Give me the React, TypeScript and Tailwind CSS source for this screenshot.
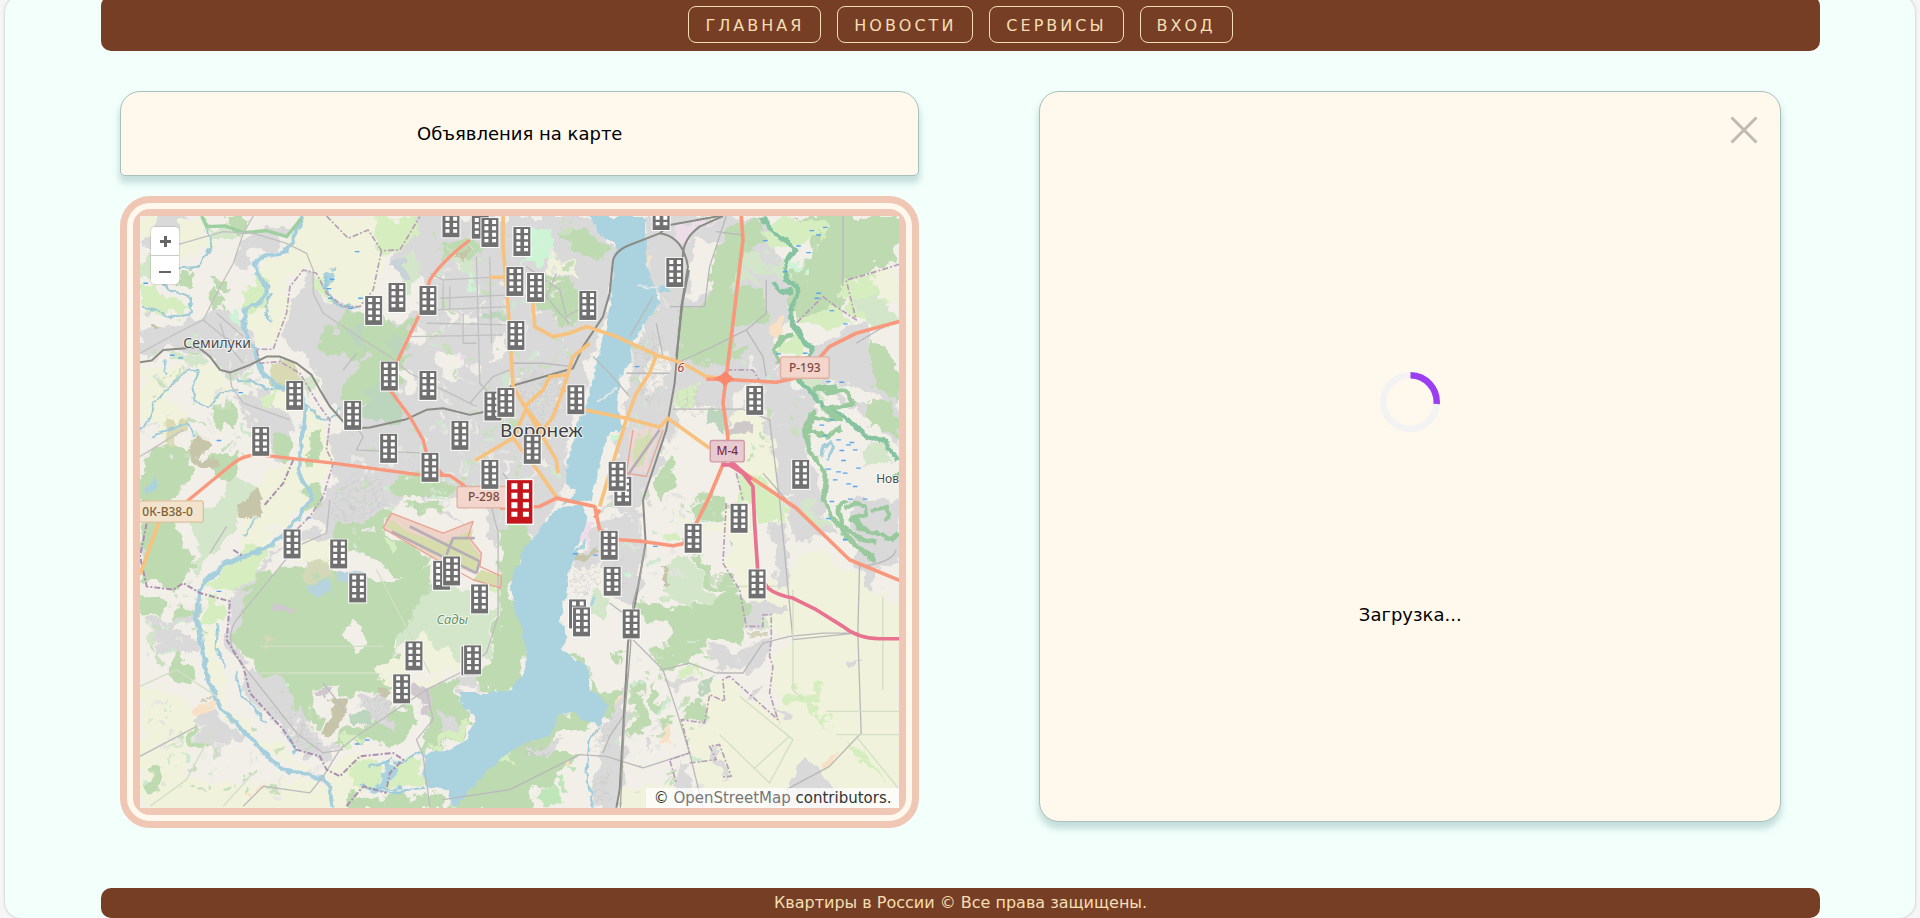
import React from "react";

type Shape = { fill: string; d: string };
type Line = { color: string; width: number; d: string; dash?: string };

const FARM = "#f0f2db";
const FOREST = "#bedab1";
const GRASS = "#d6eebf";
const ALLOT = "#d3e6ca";
const TOWN = "#d9d9d9";
const LAND = "#f2efe9";
const WATER = "#aad3df";
const BROWN = "#c7c5a9";
const MINT = "#cdf4d5";
const SCRUB = "#bcd5bd";
const PEACH = "#f8e0c4";
const PINK = "#ecdde9";

/* Land cover, north-west quarter */
const areasNW: Shape[] = [
  { fill: TOWN, d: "M930 78H1450L1520 190 1500 330 1450 480 1400 640 1370 800 1360 900 1310 1000 1290 1060 1180 1020 1040 1000 900 900 780 1010 650 1060 620 960 680 870 640 780 700 690 660 640 620 560 560 480 520 440 540 330 590 250 620 270 640 330 760 380 880 400 950 310 930 230 840 230 850 190 880 170Z" },
  { fill: TOWN, d: "M285 380 340 350 400 400 430 450 440 520 400 560 340 545 300 500 180 460 110 500 90 490V430L220 400Z" },
  { fill: TOWN, d: "M90 78H230L200 150 130 190 90 170ZM410 130 480 110 540 140 500 180 430 190 410 250 370 230 390 160ZM380 620 470 600 540 660 555 730 500 820 440 720 400 680ZM110 340 160 300 170 360 120 380ZM920 540 1200 560 1200 800 1000 860 940 780Z" },
  { fill: FARM, d: "M90 78H150L130 120 90 140ZM200 100 285 78 290 120 330 160 270 170 210 210 200 160ZM575 78H700L815 180 810 280 765 350 700 350 650 300 605 240 575 240 530 290 535 360 510 440 490 475 440 475 400 380 470 300 440 230 520 190 550 130Z" },
  { fill: FARM, d: "M700 78H830L790 180 715 145ZM90 540 160 520 210 560 170 620 230 660 230 720 180 760 120 690 90 700ZM270 520 340 545 350 600 300 650 250 620ZM480 580 555 590 545 700 500 650ZM590 640 660 690 660 810 610 920 570 830ZM470 850 550 810 580 870 600 930 510 1010 390 1090 400 990Z" },
  { fill: GRASS, d: "M820 78H930L900 150 860 185 820 180 780 115ZM450 235 480 300 470 340 405 372 390 310 430 280ZM590 245 640 270 690 350 640 320ZM90 300 140 290 180 330 240 350 220 380 150 380 90 350ZM450 620 500 600 490 640Z" },
  { fill: FOREST, d: "M355 78H420L400 130 350 112ZM690 395 740 355 810 370 860 415 925 375 850 520 740 450ZM690 400 760 440 770 470 740 520 640 475 660 430ZM745 520 840 475 900 500 860 590 830 620 750 650 690 610ZM1000 150 1110 150 1110 180 1060 210 1000 220ZM200 250 240 230 250 280 210 290ZM300 310 340 330 320 370ZM340 270 360 300 320 320 300 280Z" },
  { fill: FOREST, d: "M120 790 190 750 240 790 250 850 170 950 90 960V850ZM310 640 370 640 390 700 360 730 320 700ZM310 790 390 790 370 870 310 850ZM480 740 520 740 550 800 520 810 490 790ZM600 740 650 700 640 780 600 840ZM840 860 950 850 1040 900 1000 930 840 900ZM480 560 530 580 510 600 460 580ZM580 880 620 870 640 940 590 970Z" },
  { fill: ALLOT, d: "M190 485 270 490 290 530 240 540 180 500ZM460 510 430 540 430 600 400 570ZM380 850 450 900 370 1010 330 1080 280 1110 260 1010ZM90 210 170 200 190 240 130 270 90 260ZM290 95 350 115 390 130 370 150 310 130ZM580 540 620 570 600 620 560 590ZM870 200 920 190 940 240 900 310 870 290ZM1020 170 1100 210 1100 270 1040 240Z" },
  { fill: SCRUB, d: "M720 400 770 400 770 470 730 470ZM770 600 880 600 870 680 760 700ZM500 510 560 560 520 570 480 530ZM1125 360 1185 360 1180 385 1125 385ZM840 440 890 450 860 490Z" },
  { fill: BROWN, d: "M265 740 290 770 285 800 340 810 320 850 260 830 240 790ZM135 410 155 400 160 420 145 430ZM375 960 450 900 460 950 410 990ZM1020 190 1070 170 1060 210Z" },
  { fill: "#d9d9b3", d: "M480 520 530 515 590 570 560 600 480 570ZM150 700 200 720 240 700 200 770Z" },
  { fill: LAND, d: "M860 520 900 540 920 600 890 620ZM1010 370 1040 365 1040 410 1010 410ZM1055 365 1095 365 1095 410 1055 410ZM980 490 1050 480 1080 540 1000 570ZM900 420 960 420 940 470 890 470ZM1150 440 1200 440 1200 500 1140 510ZM820 370 850 390 900 340 870 410ZM800 240 840 260 860 350 820 380 790 340Z" },
  { fill: MINT, d: "M1060 255 1080 250 1085 310 1060 310ZM345 365 385 370 380 400 350 390ZM1250 150 1330 130 1340 230 1270 230Z" },
  { fill: PINK, d: "M1045 475 1070 490 1065 530 1045 515Z" },
  { fill: "#c9d2d8", d: "M840 220 880 200 900 260 870 270Z" },
  { fill: WATER, d: "M110 890 130 870 150 885 140 908 118 908ZM640 230 670 240 665 300 650 290Z" },
];

/* Land cover, north-east quarter */
const areasNE: Shape[] = [
  { fill: TOWN, d: "M440 78H800L830 200 880 300 870 400 820 450 830 520 900 600 960 640 910 760 960 870 960 960 870 930 760 860 760 780 690 760 670 640 640 660 520 640 520 740 430 960H300L340 820 420 440 470 330 440 250Z" },
  { fill: TOWN, d: "M920 490 1060 410 1110 400 1120 520 1200 600V760L1100 700 980 600ZM800 680 900 700 910 800 940 900 840 910 830 800ZM100 78 280 78 340 160 330 300 200 420 100 400Z" },
  { fill: LAND, d: "M600 130 660 150 640 300 570 320 570 200ZM580 690 640 690 640 760 600 740ZM500 740 600 840 560 960H470ZM980 570 1120 600 1150 640 1040 640ZM730 590 800 590 800 660 690 650ZM430 540 500 470 500 600 440 620ZM280 860 350 870 320 950 280 950ZM980 690 1080 680 1100 800 1060 900 1000 900Z" },
  { fill: FOREST, d: "M660 160 720 90 790 78 760 200 710 260 700 480 760 460 740 500 560 520 530 500 545 350 615 350 640 230ZM700 300 800 300 800 380 700 440ZM880 78H1200V210L1040 270 1030 380 1060 400 900 400 870 330 850 270 930 180 960 110ZM530 390 660 400 660 500 540 520ZM190 120 250 130 330 170 320 210 280 220 220 180ZM130 240 200 260 270 330 220 400 110 370Z" },
  { fill: FOREST, d: "M1120 440 1200 520V640L1140 600 1110 530ZM1090 640 1180 640 1200 730 1110 720ZM100 280 150 300 170 340 130 350ZM490 820 520 790 540 880 480 930Z" },
  { fill: GRASS, d: "M780 120 860 78 990 110 880 170 800 180 780 170ZM1040 270 1120 250 1130 330 1200 300 1130 390 1070 390 1030 300ZM730 850 760 800 860 960 700 960ZM530 590 590 580 590 650 520 650ZM890 380 1010 340 1060 400 930 410ZM840 440 900 440 910 490 840 500Z" },
  { fill: FARM, d: "M690 660 790 660 830 790 840 930 790 900 760 850 690 800ZM1120 250 1190 230 1200 350 1130 310ZM130 200 220 210 250 260 150 240Z" },
  { fill: ALLOT, d: "M740 180 820 210 830 250 720 240ZM730 240 800 290 700 280ZM820 230 860 230 880 290 840 280ZM1060 320 1120 310 1200 420 1100 400ZM1100 760 1170 760 1170 810 1080 820ZM880 540 960 560 980 640 920 600Z" },
  { fill: SCRUB, d: "M630 670 670 650 680 740 620 710Z" },
  { fill: MINT, d: "M90 130 160 120 160 200 80 230 70 180ZM870 220 900 220 900 235 875 240ZM910 240 925 240 925 270 910 265ZM320 730 380 720 360 750Z" },
  { fill: PEACH, d: "M800 400 850 390 870 420 820 450ZM440 190 460 200 450 270Z" },
  { fill: "#cfc8c8", d: "M695 700 750 700 750 735 695 735Z" },
  { fill: PINK, d: "M510 115 660 78 600 110 560 160 545 160Z" },
  { fill: "#e9d8d5", d: "M400 710 490 710 440 860 380 850Z" },
  { fill: "#d5ddb3", d: "M410 740 470 720 430 830 390 840Z" },
];

/* Land cover, south-west quarter */
const areasSW: Shape[] = [
  { fill: FARM, d: "M90 560 230 600 250 690 220 830 400 860 620 840 660 870 670 940H90ZM270 370 320 380 330 500 420 640 560 780 640 820 560 810 440 730 340 620 270 460ZM650 820 720 760 790 770 800 830 740 890 700 930H660ZM400 130 520 90 450 160 380 180ZM560 130 660 100 660 180 560 190ZM810 520 940 390 1050 490 950 580 820 560Z" },
  { fill: LAND, d: "M340 500 420 560 470 640 560 750 440 700 350 600ZM240 640 420 720 520 800 400 830 350 700 230 670ZM90 380 210 320 250 420 200 500 140 470ZM190 0 240 30 250 130 200 180ZM720 150 800 200 840 160 880 200 780 260ZM90 270 200 260 240 290 140 320ZM960 0 1160 0 1170 180 1110 100ZM860 450 960 510 980 540 910 540Z" },
  { fill: FOREST, d: "M410 210 520 210 600 220 690 210 830 250 960 200 970 250 850 440 870 470 800 520 850 560 830 590 740 570 700 610 690 560 610 565 600 620 640 640 620 680 580 675 480 560 410 490 370 400 380 300Z" },
  { fill: FOREST, d: "M660 90 750 60 850 40 830 90 900 140 980 180 890 230 820 190 740 150 660 160ZM90 70 200 20 210 120 260 180 210 270 90 250ZM90 290 160 300 150 350 90 340ZM210 320 270 330 260 360 200 390ZM240 680 310 740 290 750 240 730ZM110 810 150 800 150 870 120 880ZM1190 90 1250 120 1260 0 1180 30ZM1180 150 1240 140 1210 260 1260 430 1230 560 1180 580 1110 570 1100 530 1140 450 1170 370Z" },
  { fill: FOREST, d: "M960 570 1050 530 1040 600 1100 660 1060 720 930 750 960 660ZM680 720 720 680 800 680 760 730 670 740ZM700 890 760 880 820 900 960 880 1000 890 1020 940H720ZM1040 880 1100 790 1180 780 1260 730V940H1040ZM810 630 900 620 920 680 850 750 770 710ZM190 450 230 480 250 550 180 530ZM880 0 1000 10 1020 40 940 50Z" },
  { fill: LAND, d: "M695 380 730 360 750 390 760 440 735 445 700 410Z" },
  { fill: ALLOT, d: "M870 400 960 250 1090 280 1090 340 1170 300 1160 380 1130 470 1050 490 940 390 860 450ZM230 30 370 0 390 20 330 130 300 170 250 240 260 120ZM90 370 150 350 150 450ZM160 740 230 700 210 750Z" },
  { fill: GRASS, d: "M270 260 340 210 420 150 500 130 430 220 370 290 300 280ZM280 300 350 300 350 370 280 370ZM720 790 790 780 810 830 780 860 720 870 740 830ZM850 780 930 760 950 860 830 880ZM960 740 1080 650 1095 670 1050 720ZM820 110 850 110 860 150 830 160ZM680 720 780 710 700 750ZM1090 240 1170 270 1170 300Z" },
  { fill: TOWN, d: "M100 350 200 370 250 330 260 360 190 400 250 410 250 450 150 470 160 410 120 400ZM250 640 330 640 360 680 410 700 390 720 350 700 330 760 290 740 230 660ZM370 290 430 260 400 320 380 400 400 500 350 450ZM410 510 500 540 540 610 640 720 680 740 640 800 560 740 480 650 410 590ZM740 590 820 590 850 650 840 690 780 650 740 620ZM1030 530 1110 540 1110 580 1060 575ZM980 640 1040 650 1040 680 1010 700ZM560 90 650 90 640 110 520 140 380 290 370 280 490 160ZM1110 0 1160 0 1165 150 1140 110ZM90 130 110 150 90 220ZM650 0H800L770 60 680 80Z" },
  { fill: "#cfc9cd", d: "M500 320 540 320 535 345 505 340ZM880 530 960 570 960 660 920 600ZM610 570 665 565 650 610Z" },
  { fill: "#d2d8b8", d: "M580 185 650 180 670 240 580 235ZM455 430 490 415 510 435 470 450Z" },
  { fill: BROWN, d: "M670 605 705 610 705 660 660 710 625 680 660 650ZM375 20 410 0 460 0 410 50ZM280 580 295 590 285 600ZM810 560 850 580 840 610 810 600Z" },
  { fill: PEACH, d: "M235 625 300 600 325 625 290 640 240 645ZM450 850 475 860 455 870ZM410 890 435 890 430 910ZM1180 220 1165 240 1165 200Z" },
  { fill: SCRUB, d: "M720 640 790 650 790 680 740 670Z" },
  { fill: "#b7d3de", d: "M600 240 680 245 670 285 600 280ZM690 210 740 210 745 250 700 240Z" },
  { fill: WATER, d: "M800 820 830 780 850 790 830 880 800 870Z" },
  { fill: MINT, d: "M1175 150 1195 145 1190 155ZM510 565 535 555 520 570ZM1200 405 1215 410 1205 415Z" },
];

/* Land cover, south-east quarter */
const areasSE: Shape[] = [
  { fill: FARM, d: "M680 0H760L770 230 850 260 870 200 960 150 1060 230 1200 320V930H620L600 850 550 700 540 660 610 660 620 590 680 530 830 650 820 480 880 410 800 380 740 300 680 190ZM350 860 530 850 530 930H350ZM540 30 600 80 680 70 660 110 560 110Z" },
  { fill: TOWN, d: "M300 60 420 20 430 200 400 320 330 290 300 180 210 210 220 190 300 120ZM720 320 850 300 870 340 800 340 790 380 740 380ZM620 440 700 460 730 500 700 520 640 510ZM700 460 800 420 800 500 740 510ZM330 620 380 540 370 900 350 930H280L290 780ZM490 520 590 530 590 545 520 550 520 590ZM750 560 790 570 760 600ZM830 640 860 630 870 655 840 665ZM630 740 655 735 690 820 670 835ZM790 930 870 850 920 780 960 810 1050 930ZM820 70 860 70 870 260 830 260ZM850 0 960 0 1000 110 890 130ZM1050 0H1200V200L1080 230ZM530 780 560 800 590 870 560 900 530 860ZM250 100 300 90 300 190 220 190Z" },
  { fill: TOWN, d: "M1050 480 1090 470 1080 500 1055 505ZM1080 200 1130 220 1140 260 1090 270ZM440 700 460 700 455 750 440 740ZM50 730 180 720 160 760 30 770Z" },
  { fill: FOREST, d: "M450 460 530 440 500 340 600 320 640 290 710 270 740 320 730 430 620 430 610 460 480 520ZM570 160 710 260 700 290 620 240ZM400 300 470 310 520 360 430 370ZM190 450 250 480 300 560 360 600 330 650 280 600 270 520ZM400 550 440 545 440 690 390 690ZM465 530 495 620 460 620ZM545 640 610 590 615 670ZM470 650 530 650 530 690 480 680ZM0 80 60 90 90 140 40 200 40 350 80 430 40 570 0 580ZM180 640 240 630 270 690 170 710 80 760 240 760 160 850 50 880 0 880V790L90 720ZM600 0H680L680 60 600 60ZM330 460 360 440 350 500Z" },
  { fill: ALLOT, d: "M500 210 560 160 620 240 650 290 560 330 490 310ZM280 280 320 300 310 350 270 340ZM790 350 810 350 810 390 790 390ZM930 0 1000 80 960 90 900 40Z" },
  { fill: SCRUB, d: "M600 540 660 520 650 570 600 585Z" },
  { fill: GRASS, d: "M490 90 540 80 540 125 500 125ZM760 0 820 0 860 60 780 75ZM540 495 590 495 605 520 540 522ZM830 580 880 560 900 590 960 560 960 590 930 600 1000 690 1040 730 1100 760 1160 860 1090 790 1010 700 900 600 840 620ZM0 790 50 760 40 800Z" },
  { fill: "#bfe6b8", d: "M110 890 160 850 190 900 160 930ZM200 800 230 800 230 830ZM170 840 200 850 220 890 190 880Z" },
  { fill: MINT, d: "M380 230 390 200 400 230Z" },
  { fill: PEACH, d: "M475 685 520 685 510 720 475 735ZM960 780 990 755 1000 790 970 805ZM285 685 300 680 300 710ZM340 610 360 610 350 630ZM180 795 200 800 190 820Z" },
  { fill: BROWN, d: "M215 150 280 155 260 180 220 178ZM490 210 510 205 505 245 490 245Z" },
  { fill: "#d6d3bd", d: "M750 390 790 390 790 415 755 415Z" },
  { fill: PINK, d: "M245 70 285 60 290 110 240 145Z" },
];

const airport: Shape[] = [
  { fill: "#eed3c8", d: "M820 1015 845 970 1000 1030 1090 995 1070 1040 1115 1090 1100 1155 980 1110Z" },
  { fill: "#d6dcab", d: "M845 990 900 1030 1000 1060 1090 1020 1080 1060 1110 1100 1100 1150 960 1090 830 1010ZM1115 1140 1175 1160 1170 1195 1090 1170Z" },
];

const reservoir: Shape[] = [
  { fill: WATER, d: "M1440 78H1610L1608 230 1640 300 1645 350 1610 390 1580 430 1560 480 1570 520 1530 560 1520 660 1530 680 1535 710 1500 730 1470 830 1455 880 1450 930 1350 950 1310 990 1240 1080 1200 1190 1215 1250 1250 1360 1250 1430 1210 1500 1130 1510 1050 1510 1045 1530 1090 1580 1095 1600 1060 1660 1010 1680 940 1690 945 1790 1010 1800 1030 1854 1180 1700 1260 1650 1320 1640 1350 1580 1400 1560 1470 1600 1490 1560 1490 1550 1440 1500 1440 1440 1360 1380 1370 1320 1350 1290 1370 1210 1380 1120 1430 1000 1420 950 1340 960 1400 900 1370 890 1370 810 1390 760 1400 700 1430 640 1470 480 1500 350 1510 210 1520 180 1500 150 1470 130Z" },
  { fill: WATER, d: "M1640 290 1670 285 1680 305 1650 310ZM1420 1060 1440 1050 1380 1120 1370 1110ZM1530 700 1540 710 1525 730ZM1860 1050 1875 1060 1865 1075ZM1445 1240 1455 1220 1460 1235 1440 1260ZM1290 1490 1400 1450 1440 1540 1490 1550 1480 1605 1440 1600 1380 1560 1330 1540Z" },
  { fill: "#e3e8e6", d: "M1450 640 1515 597 1518 602 1470 635ZM1580 290H1650V295H1580Z" },
];

const waterways: Line[] = [
  { color: "#a6cfdd", width: 13, d: "M582 78 555 125 535 175 510 192 460 198 438 220 440 250 470 290 470 315 440 345 405 362 397 390 420 450 440 500 458 548 495 585 530 595 575 615 582 660 575 760 566 850 590 890 608 925 570 980 520 1040 460 1082 400 1100 340 1125 295 1165 268 1205 262 1290 275 1380 295 1470 330 1550 380 1605 440 1665 500 1725 545 1750 600 1755 640 1770 660 1800 668 1854" },
  { color: "#9fcbd6", width: 6, d: "M285 78 290 120 305 170 270 230 130 240M130 270 180 300 240 320 240 370 190 385 130 360 90 350M90 720Q120 700 130 640L200 570Q230 535 265 540L245 590 250 630 295 655 330 610 380 600M380 575 420 570 470 600 520 590M580 640 640 690 680 680 690 655M640 250 650 290 670 335 700 355 740 348" },
  { color: "#9ccbdc", width: 6, d: "M160 510 165 540 175 555M130 740 230 700 260 740M440 980 400 1040M485 400 462 350 490 310M325 1300 320 1370 345 1430M375 1440 400 1520 470 1600M530 1640 555 1690M820 1810 940 1795M850 1720 940 1690M780 1735 850 1710M1470 1610 1440 1650 1430 1750 1440 1810 1455 1854M750 1790 830 1800 880 1795" },
  { color: "#86c3a1", width: 15, d: "M1960 78 1980 120 2040 160 2055 190 2025 210 2030 270 2065 300 2048 340 2045 400 2080 440 2105 480 2090 530 2060 560M1995 280 2010 300 2045 305" },
  { color: "#86c3a1", width: 13, d: "M2062 560 2100 600 2140 650 2180 668 2220 690 2260 735 2330 760 2365 810" },
  { color: "#98ca9d", width: 14, d: "M2050 430 2010 450 1995 480 2010 520M2110 600 2180 590 2150 610 2210 600 2230 640 2150 655 2190 690 2110 680 2095 720 2150 740 2200 715M2110 660 2090 720 2100 780 2150 850 2140 930 2170 990 2230 1060 2300 1115M2210 960 2230 940 2265 950 2275 975 2230 985 2250 1015 2300 1030 2345 1050 2368 1030M2210 930 2185 960 2200 1010 2260 1050 2300 1060M2290 960 2330 950 2340 980 2320 990M2340 870 2370 850" },
  { color: "#a5cdd9", width: 9, d: "M2135 800Q2140 760 2165 755 2180 760 2150 812" },
];

const minorRoads: Line[] = [
  { color: "#c0c0c0", width: 4, d: "M90 490 200 430 280 390 320 310 370 220 400 130 430 78M200 165 340 125 430 130 530 160 590 190 610 240 610 310 640 370 730 430 840 500 900 550 1000 600 1100 650M280 390 340 440 400 470M320 370 400 440M330 400 350 460 400 520M360 550 365 590 400 640 540 690M90 800 220 720M960 250 1000 270 1180 260M990 325 1200 315M970 360 1200 350M950 400 1200 405M900 440 1180 435M1100 200 1110 580M1140 200 1145 460M1060 370V460H1100M1000 270V360M1020 290V360" },
  { color: "#bdbdbd", width: 4, d: "M1110 580 1140 610M1200 540 1150 560 1080 640M730 700 760 740 740 780 940 790M700 540 740 490M380 1290Q350 1330 370 1390L410 1440 560 1630 640 1690 700 1680M380 1290 560 1070 650 1030 660 930M350 1010 300 1090M90 1700 260 1610M400 1850 460 1790 600 1810 640 1760 690 1680 740 1640 950 1500 1050 1450 1130 1390 1165 1280 1165 1030 1140 930M640 1480 710 1570M950 1500 970 1590 920 1650 940 1700 960 1850M1250 230 1350 300 1370 380 1440 340M1340 250 1310 320 1350 370 1380 400" },
  { color: "#b9b9b9", width: 4, d: "M1200 520 1300 520 1390 530M1450 500 1490 540 1560 620M1820 125 1900 135M1680 350H1785L1800 230 1850 78M1700 520 1810 470 1910 420 1970 370 1970 270M1850 450 1910 420 1960 500 1970 560M1640 400 1660 500M1550 550 1680 550M1630 320 1560 440M1690 658H1900L1980 690 2010 930 2050 1350 2240 1330M1180 850 1240 930M1500 1240 1540 1270M1570 1350 1660 1440 1700 1560 1740 1690 1780 1854M1660 1440 1740 1420 1820 1450 1900 1450 1960 1360 2040 1340 2140 1330 2250 1330M2250 1130 2245 1330 2255 1630 2160 1730 2030 1800M1000 1830 1200 1800 1410 1695 1490 1700 1600 1735 1740 1690M1480 1690 1500 1640 1540 1580 1555 1450M2360 1080Q2350 1120 2250 1130M1960 850 2030 930M2200 78V290M2340 400 2240 460" },
  { color: "#d2dfc6", width: 4, d: "M90 1490 200 1440 320 1520M310 1620 230 1770 120 1850M430 1750 340 1850M800 1140 960 1450M450 1370H820M450 1450H800M1830 1635 1980 1780 2050 1650 1890 1520M1850 1190H2010M2050 1200 2050 1500 2080 1530M2150 1565H2370M2180 1635H2370M2320 1220V1500M1930 1740 2040 1640M2240 1640 2370 1800" },
];

const railways: Line[] = [
  { color: "#8b8b86", width: 6, d: "M90 517 125 512 160 480 265 472 300 500 330 540 360 548 420 525 470 500 510 500 560 520 605 555 630 600 660 650 700 695 740 715 780 713 890 688 950 660 1000 655 1080 675 1130 665 1200 600M1200 590 1390 535 1420 470 1480 380 1500 310 1510 210Q1520 180 1560 165L1650 130 1680 105 1830 78M1650 130Q1720 140 1735 230L1715 350 1695 580 1670 720 1600 930" },
  { color: "#8b8b86", width: 6, d: "M1720 210Q1715 150 1770 110L1840 78M1738 240 1720 330 1700 500M1600 930 1608 1060 1580 1220 1555 1360 1530 1800 1520 1854" },
  { color: "#a5a5a0", width: 4, d: "M1605 1070 1590 1170 1570 1240 1562 1380 1545 1580 1532 1854" },
];

const borders: Line[] = [
  { color: "#b79fb8", width: 5, dash: "18 6 6 6", d: "M650 78 715 145 775 120 815 182 870 180 930 80M815 182 790 300 750 350 700 350 650 310 620 250 580 240 540 290 530 370 500 450 490 478H440L450 520 510 515 570 550 630 650 660 690 650 780 670 820 640 920 600 980 540 1040" },
  { color: "#a98fb0", width: 6, dash: "18 6 6 6", d: "M550 810 520 880 460 950M100 930 110 1000 90 1100 110 1190 190 1200 220 1180 270 1210 360 1235 350 1350 400 1430 420 1510 520 1620 560 1680 630 1700 650 1740 690 1760 750 1700 850 1690 880 1710 840 1750 830 1800M710 1850 760 1790 830 1810M370 1080 400 1100" },
  { color: "#b79fb8", width: 5, dash: "18 6 6 6", d: "M2370 223 2250 260 2210 270 2240 390 2180 350 2140 320 2080 380 2050 410M1850 540H1930L1960 590M1880 850 1900 930M1850 940 1840 1120 1890 1200 1910 1310H1960V1275H1985V1345L1980 1400 1990 1430 1980 1510 2005 1590 1860 1460 1840 1470 1845 1535 1800 1515 1785 1600 1715 1590 1740 1690 1680 1710 1700 1780M1740 1720 1820 1710 1800 1670 1830 1665 1865 1760 1840 1762" },
];

const majorRoads: Line[] = [
  { color: "#f7c27d", width: 11, d: "M1180 78 1180 170 1195 350 1210 590 1245 650 1340 810 1345 850M1140 262H1182M1268 320 1275 410 1330 440 1380 430 1430 410 1520 440 1640 495 1720 520 1790 560 1840 565M1095 812 1210 745 1250 655M1210 745 1290 850 1345 928M1390 500 1360 600 1330 680 1300 720 1245 650 1300 600 1320 560 1370 555M1390 500 1440 460M1425 660 1550 685 1650 712 1675 685 1800 775M1640 495 1620 550 1580 610 1550 690 1500 850 1470 950M90 1155 160 960M1352 600H1370" },
  { color: "#f8987c", width: 10, d: "M200 960 370 820Q400 795 450 795L670 820 930 855 1020 857 1060 885 1120 940M1080 150Q1000 210 960 270L940 350 860 520 840 600 900 680 940 750 950 790 1000 858" },
  { color: "#f8987c", width: 11, d: "M1895 78 1900 150 1870 400 1850 560 1840 640 1855 740 1850 800 1800 920 1770 980 1740 1040 1720 1062 1690 1068 1600 1055 1530 1050 1470 1020 1455 950 1340 925 1290 950 1170 955M1455 985 1470 960M1790 568 1840 568 2000 577 2080 560 2160 470 2240 430 2370 395M1860 820 1950 880 2060 955 2220 1110 2370 1172" },
  { color: "#e8728f", width: 11, d: "M1835 825 1860 825 1900 850 1930 890 1935 1000 1945 1150 1975 1195Q2000 1215 2050 1225L2120 1260 2200 1310Q2250 1350 2320 1347H2370M1865 815 1925 870" },
];

const airfield: Line[] = [
  { color: "#b5adb8", width: 8, d: "M845 1025 1100 1150M900 1010 1110 1115 1100 1150M1010 1095 1030 1045H1095M1555 855 1650 720" },
  { color: "#eaa392", width: 4, d: "M820 1015 845 970 1000 1030 1090 995 1075 1040 1115 1090 1110 1130 1175 1160 1172 1195 1090 1170 980 1110 820 1015M1570 720 1550 850 1610 860 1660 720" },
];

const bogTicks = [
  [2100, 122], [2120, 135], [2140, 112], [2060, 168], [2090, 188], [1960, 152], [2020, 245], [2120, 310], [2115, 325],
  [2160, 362], [2200, 402], [2080, 490], [2000, 492], [2150, 575], [2190, 577], [2160, 690], [2130, 706], [2140, 738],
  [2180, 750], [2210, 765], [2190, 782], [2230, 780], [2195, 812], [2180, 846], [2240, 835], [2150, 838], [2210, 882],
  [2230, 890], [2160, 935], [2215, 928], [2260, 928], [2220, 758], [2170, 870], [2200, 850], [1575, 530], [1390, 1092],
  [1450, 1096], [1630, 1070], [2150, 986], [2200, 1050], [660, 268], [650, 296], [735, 185], [655, 325], [745, 325],
  [715, 355], [180, 496], [205, 504], [320, 752], [385, 608], [100, 280], [590, 984], [320, 1205], [765, 1651], [735, 1663],
];

/* Small parks and yards, scattered with a fixed seed so the map is stable */
const speckles = (() => {
  let seed = 41;
  const next = () => {
    seed = (seed * 16807) % 2147483647;
    return seed / 2147483647;
  };
  const tones = ["#c6dfba", "#efece6", "#cfe8d0", "#e3e3e0", "#c9dfbe", "#e9e7e2"];
  const zones = [
    [950, 90, 420, 850], [1560, 330, 130, 560], [680, 700, 480, 260], [1480, 900, 360, 280], [100, 400, 340, 400],
    [1520, 1360, 260, 440], [100, 1540, 520, 280], [1900, 500, 160, 300], [90, 1200, 180, 220], [700, 1000, 130, 90],
  ];
  return zones.flatMap(([x, y, w, h]) =>
    Array.from({ length: Math.round((w * h) / 2000) }, () => {
      const px = Math.round(x + next() * w);
      const py = Math.round(y + next() * h);
      const a = Math.round(6 + next() * 16);
      const b = Math.round(5 + next() * 14);
      return {
        fill: tones[Math.floor(next() * tones.length)],
        d: `M${px} ${py}l${a} ${-Math.round(b / 3)} ${Math.round(a / 3)} ${b} ${-a} ${Math.round(b / 3)}Z`,
      };
    }),
  );
})();

const markers: [number, number][] = [
  [995, 53], [1083, 57], [1112, 82], [1208, 109], [1187, 229], [1249, 247], [833, 277], [763, 316], [926, 286],
  [1190, 391], [810, 513], [926, 541], [1121, 603], [1160, 592], [526, 571], [700, 631], [424, 709], [808, 730],
  [1022, 691], [932, 787], [1112, 808], [1239, 733], [1626, 31], [1667, 202], [1406, 301], [1370, 584], [1907, 586],
  [1511, 859], [1494, 814], [2045, 808], [1860, 940], [518, 1017], [658, 1047], [715, 1149], [967, 1111], [997, 1098],
  [1081, 1182], [884, 1353], [847, 1452], [1052, 1368], [1060, 1365], [1470, 1021], [1722, 1000], [1914, 1137],
  [1479, 1129], [1375, 1227], [1387, 1251], [1536, 1257],
];

function Areas({ items }: { items: Shape[] }) {
  return (
    <>
      {items.map((s, i) => (
        <path key={i} d={s.d} fill={s.fill} />
      ))}
    </>
  );
}

function Lines({ items }: { items: Line[] }) {
  return (
    <g fill="none" strokeLinejoin="round">
      {items.map((l, i) => (
        <path key={i} d={l.d} stroke={l.color} strokeWidth={l.width} strokeDasharray={l.dash} />
      ))}
    </g>
  );
}

function Building({ x, y, color, scale = 1 }: { x: number; y: number; color: string; scale?: number }) {
  return (
    <g transform={`translate(${x} ${y}) scale(${scale})`}>
      <rect width="57" height="92" fill="#fff" />
      <rect x="3" y="2" width="51" height="87" fill={color} />
      <path fill="#fff" d="M12 8h12v12H12zM35 8h12v12H35zM12 27h12v12H12zM35 27h12v12H35zM12 46h12v12H12zM35 46h12v12H35zM12 65h12v10H12zM35 65h12v10H35z" />
    </g>
  );
}

function RoadShield({ x, y, w, text, fill, stroke, color }: { x: number; y: number; w: number; text: string; fill: string; stroke: string; color: string }) {
  return (
    <g>
      <rect x={x} y={y} width={w} height="64" rx="6" fill={fill} stroke={stroke} strokeWidth="4" />
      <text x={x + w / 2} y={y + 45} textAnchor="middle" fontSize="36" fontWeight="500" fill={color}>
        {text}
      </text>
    </g>
  );
}

function CityMap() {
  return (
    <svg viewBox="90 78 2280 1776" className="block h-auto w-full font-['Noto_Sans',sans-serif]" role="img" aria-label="Карта Воронежа">
      <defs>
        <filter id="coast" filterUnits="userSpaceOnUse" x="0" y="0" width="2460" height="1940" colorInterpolationFilters="sRGB">
          <feTurbulence type="fractalNoise" baseFrequency="0.018" numOctaves="4" seed="7" result="noise" />
          <feDisplacementMap in="SourceGraphic" in2="noise" scale="75" xChannelSelector="R" yChannelSelector="G" />
        </filter>
        <filter id="shore" filterUnits="userSpaceOnUse" x="0" y="0" width="2460" height="1940" colorInterpolationFilters="sRGB">
          <feTurbulence type="fractalNoise" baseFrequency="0.03" numOctaves="3" seed="3" result="noise" />
          <feDisplacementMap in="SourceGraphic" in2="noise" scale="24" xChannelSelector="R" yChannelSelector="G" />
        </filter>
        <pattern id="streets" width="26" height="20" patternUnits="userSpaceOnUse" patternTransform="rotate(-18)">
          <path d="M0 0H26M0 0V20" stroke="#c6c6c6" strokeWidth="3" />
        </pattern>
      </defs>
      <rect x="90" y="78" width="2280" height="1776" fill={LAND} />
      <g filter="url(#coast)">
        <rect x="0" y="0" width="2460" height="1940" fill={LAND} />
        <Areas items={areasNW} />
        <g transform="translate(1170 0)">
          <Areas items={areasNE} />
        </g>
        <g transform="translate(0 930)">
          <Areas items={areasSW} />
        </g>
        <g transform="translate(1170 930)">
          <Areas items={areasSE} />
        </g>
        <Areas items={speckles} />
        <path
          fill="url(#streets)"
          d="M1230 560 1370 540 1330 700 1240 760ZM700 860 800 850 840 960 720 1010 650 1000ZM1390 1130 1470 1120 1470 1200 1390 1220ZM1490 1120 1560 1110 1540 1220 1490 1180ZM740 1520 820 1520 850 1590 780 1590ZM470 1560 540 1560 660 1680 600 1700ZM1700 600 1760 590 1790 680 1710 670ZM1460 1580 1520 1570 1500 1700 1450 1690ZM1470 1740 1510 1730 1500 1850 1460 1850ZM1230 1660 1340 1650 1310 1690 1210 1700ZM1590 440 1670 440 1660 640 1580 620Z"
        />
      </g>
      <g filter="url(#shore)">
        <Areas items={reservoir} />
      </g>
      <Areas items={airport} />
      <g filter="url(#shore)">
        <Lines items={waterways} />
      </g>
      <path d={bogTicks.map(([x, y]) => `M${x} ${y}h14`).join("")} stroke="#57a5ee" strokeWidth="4" />
      <path d="M275 78 290 110 345 108 400 128 470 122 530 140 575 85" fill="none" stroke="#9dcf9f" strokeWidth="10" />
      <Lines items={minorRoads} />
      <Lines items={airfield} />
      <Lines items={borders} />
      <Lines items={railways} />
      <Lines items={majorRoads} />
      <path d="M1812 565 1835 555 1845 545 1860 555 1875 568 1855 580 1845 590 1835 578Z" fill="#f8876b" />

      <g stroke="#fff" strokeOpacity="0.7" strokeWidth="6" paintOrder="stroke" strokeLinejoin="round">
        <text x="220" y="474" fontSize="42" fill="#4d4d4d">Семилуки</text>
        <text x="1171" y="740" fontSize="57" fill="#3f3f3f">Воронеж</text>
        <text x="2300" y="881" fontSize="36" fill="#4d4d4d">Нов</text>
        <text x="980" y="1304" fontSize="39" fontStyle="italic" fill="#6c9468">Сады</text>
        <text x="1703" y="547" fontSize="39" fontStyle="italic" fill="#a83c3c">6</text>
      </g>
      <RoadShield x={1042} y={890} w={160} text="Р-298" fill="#f3d5cb" stroke="#e0b0a2" color="#7d4a42" />
      <RoadShield x={2013} y={501} w={146} text="Р-193" fill="#f3d5cb" stroke="#e0b0a2" color="#7d4a42" />
      <RoadShield x={1802} y={752} w={102} text="М-4" fill="#e8cbd0" stroke="#cf98a5" color="#7b2f45" />
      <RoadShield x={66} y={933} w={214} text="0К-В38-0" fill="#f3e2cc" stroke="#dcc29e" color="#7d6238" />

      {markers.map(([x, y]) => (
        <Building key={`${x}-${y}`} x={x} y={y} color="#707070" />
      ))}
      <Building x={1187} y={868} scale={1.5} color="#c3151b" />
    </svg>
  );
}

const links = ["Главная", "Новости", "Сервисы", "Вход"];

export default function App() {
  return (
    <div className="overflow-hidden bg-[#f6f6f6] font-['Verdana','DejaVu_Sans',sans-serif] text-black">
      <div className="mx-[5px] -mt-1 rounded-2xl bg-[#f2fffb] pr-[95px] pl-24 shadow-[0_0_3px_rgba(0,0,0,0.25)]">
        <header className="rounded-[10px] bg-[#773e26] pt-[10px] pb-2">
          <nav className="flex justify-center gap-4">
            {links.map((label) => (
              <a
                key={label}
                href="#"
                className="rounded-lg border border-[#f5deb3] px-4 pt-[7px] pb-[5px] text-base leading-[23px] tracking-[3px] text-[#f5deb3] uppercase"
              >
                {label}
              </a>
            ))}
          </nav>
        </header>

        <main className="flex gap-[120px] pt-10 pr-[39px] pb-[60px] pl-[19px]">
          <section className="flex min-w-0 flex-[80] flex-col gap-5">
            <h1 className="rounded-t-[20px] rounded-b-[5px] border border-[#a9c0bd] bg-[#fff8ec] pt-[30px] pb-[29px] text-center text-lg leading-6 shadow-[0_6px_6px_1px_#c5dfdc]">
              Объявления на карте
            </h1>
            <div className="rounded-[30px] border-[20px] border-double border-[#f0c6b5] bg-[#fff8ec]">
              <div className="relative">
                <CityMap />
                <div className="absolute top-[11px] left-[11px] flex w-7 flex-col gap-px overflow-hidden rounded bg-[#c9c9c9] text-[#666] shadow-[0_0_1px_1px_rgba(0,0,0,0.1)]">
                  <button type="button" aria-label="Приблизить" className="flex h-7 items-center justify-center bg-white">
                    <svg viewBox="0 0 11 11" className="size-[11px]" fill="currentColor">
                      <path d="M4 0h3v4h4v3H7v4H4V7H0V4h4z" />
                    </svg>
                  </button>
                  <button type="button" aria-label="Отдалить" className="flex h-7 items-center justify-center bg-white pt-1">
                    <svg viewBox="0 0 12 2" className="h-[2px] w-3" fill="currentColor">
                      <path d="M0 0h12v2H0z" />
                    </svg>
                  </button>
                </div>
                <p className="absolute right-0 bottom-0 bg-white/75 px-2 text-[15px] leading-5 text-[#333]">
                  © <a href="#" className="text-[#777]">OpenStreetMap</a> contributors.
                </p>
              </div>
            </div>
          </section>

          <section className="mb-[6px] flex min-w-0 flex-[74] flex-col items-center rounded-[20px] border border-[#a9c0bd] bg-[#fff8ec] shadow-[0_6px_6px_1px_#c5dfdc]">
            <button type="button" aria-label="Закрыть" className="mt-6 mr-[22px] self-end text-[#bfbab1]">
              <svg viewBox="0 0 28 28" className="size-7" fill="none" stroke="currentColor" strokeWidth="3">
                <path d="M1.500 1.500 26.500 26.500M26.500 1.500 1.500 26.500" />
              </svg>
            </button>
            <svg viewBox="0 0 60 60" className="mt-[228px] size-[60px]" fill="none" strokeWidth="6.500" aria-hidden="true">
              <circle cx="30" cy="30" r="26.700" stroke="#f3f3f3" />
              <path d="M30.500 3.300A26.700 26.700 0 0 1 56.600 32" stroke="#9b3df0" />
            </svg>
            <p role="status" className="mt-[171px] text-lg leading-6">Загрузка...</p>
          </section>
        </main>

        <footer className="rounded-[10px] bg-[#773e26] py-[3px] text-center text-base leading-6 text-[#f5deb3]">
          Квартиры в России © Все права защищены.
        </footer>
      </div>
    </div>
  );
}
